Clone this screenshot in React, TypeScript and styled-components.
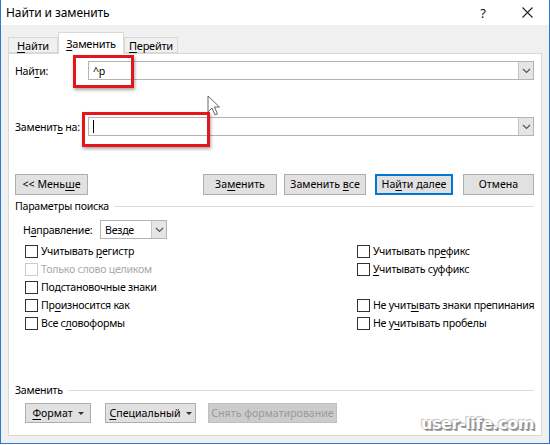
import React from "react";
import styled, { createGlobalStyle } from "styled-components";

const GlobalStyle = createGlobalStyle`
  html, body {
    margin: 0;
    padding: 0;
    background: #ffffff;
  }
  body {
    font-family: "Noto Sans", "Liberation Sans", sans-serif;
    font-size: 10.6px;
    letter-spacing: -0.25px;
    color: #000;
  }
  * {
    box-sizing: border-box;
  }
`;

const Window = styled.div`
  position: relative;
  width: 550px;
  height: 444px;
  display: flex;
  flex-direction: column;
  background: #f0f0f0;
  border: 1px solid #2b78d4;
  border-top: none;
  overflow: hidden;
  white-space: nowrap;
`;

const TitleBar = styled.div`
  height: 25px;
  background: #ffffff;
  display: flex;
  align-items: center;
  padding-left: 5px;
`;

const Title = styled.div`
  flex: 1;
  font-size: 12px;
  letter-spacing: -0.1px;
  line-height: 16px;
`;

const Caption = styled.div`
  width: 44px;
  height: 25px;
  display: flex;
  align-items: center;
  justify-content: center;
  font-size: 13px;
  color: #111;
`;

const Body = styled.div`
  flex: 1;
  display: flex;
  flex-direction: column;
  padding: 7px;
`;

const TabStrip = styled.div`
  display: flex;
  align-items: flex-end;
  height: 21px;
  position: relative;
  z-index: 1;
`;

const Tab = styled.div<{ $active?: boolean; $w: number }>`
  width: ${(p) => p.$w}px;
  height: ${(p) => (p.$active ? "22px" : "16px")};
  margin-bottom: ${(p) => (p.$active ? "-1px" : "0")};
  padding-top: ${(p) => (p.$active ? "3px" : "0")};
  text-align: center;
  font-size: 11px;
  background: ${(p) => (p.$active ? "#ffffff" : "#f0f0f0")};
  border: 1px solid #d9d9d9;
  border-bottom: ${(p) => (p.$active ? "none" : "1px solid #d9d9d9")};
  line-height: 15px;
`;

const Panel = styled.div`
  flex: 1;
  display: flex;
  flex-direction: column;
  background: #ffffff;
  border: 1px solid #d9d9d9;
  padding: 7px 7px 12px 6px;
`;

const FieldRow = styled.div<{ $gap?: number }>`
  display: flex;
  align-items: center;
  height: 19px;
  margin-top: ${(p) => p.$gap ?? 0}px;
`;

const FieldLabel = styled.div`
  width: 73px;
  line-height: 16px;
`;

const Combo = styled.div<{ $w?: number }>`
  display: flex;
  align-items: center;
  height: 19px;
  ${(p) => (p.$w ? `width: ${p.$w}px;` : "flex: 1;")}
  border: 1px solid #b4b4b4;
  background: #ffffff;
  padding-left: 4px;
`;

const ComboText = styled.div`
  flex: 1;
  line-height: 16px;
  display: flex;
  align-items: center;
`;

const Caret = styled.span`
  display: inline-block;
  width: 1px;
  height: 13px;
  background: #000;
`;

const ComboButton = styled.div`
  width: 15px;
  height: 17px;
  display: flex;
  align-items: center;
  justify-content: center;
  background: #e5e5e5;
  border-left: 1px solid #c4c4c4;
`;

const ButtonRow = styled.div`
  display: flex;
  align-items: center;
  margin-top: 38px;
`;

const Button = styled.button<{ $w: number; $default?: boolean; $h?: number; $ml?: number }>`
  width: ${(p) => p.$w}px;
  height: ${(p) => p.$h ?? 21}px;
  margin-left: ${(p) => p.$ml ?? 0}px;
  padding: 0;
  font: inherit;
  line-height: 15px;
  color: #000;
  background: #e1e1e1;
  border: 1px solid ${(p) => (p.$default ? "#0078d7" : "#adadad")};
  box-shadow: ${(p) => (p.$default ? "inset 0 0 0 1px #0078d7" : "none")};
  display: flex;
  align-items: center;
  justify-content: center;
  white-space: nowrap;

  &:disabled {
    background: #cccccc;
    border-color: #bfbfbf;
    color: #9a9a9a;
  }
`;

const Spacer = styled.div`
  flex: 1;
`;

const SectionHeader = styled.div<{ $gap?: number; $auto?: boolean }>`
  display: flex;
  align-items: center;
  line-height: 16px;
  margin-top: ${(p) => (p.$auto ? "auto" : `${p.$gap ?? 0}px`)};

  &::after {
    content: "";
    flex: 1;
    height: 1px;
    background: #dcdcdc;
    margin-left: 5px;
  }
`;

const DirectionRow = styled.div`
  display: flex;
  align-items: center;
  margin: 6px 0 0 8px;
`;

const DirectionLabel = styled.div`
  width: 77px;
  line-height: 16px;
`;

const OptionGrid = styled.div`
  display: grid;
  grid-template-columns: 332px 1fr;
  grid-auto-rows: 18px;
  margin: 3px 0 0 10px;
`;

const Option = styled.label<{ $disabled?: boolean }>`
  display: flex;
  align-items: center;
  line-height: 16px;
  color: ${(p) => (p.$disabled ? "#a8a8a8" : "#000")};
`;

const Box = styled.span<{ $disabled?: boolean }>`
  width: 13px;
  height: 13px;
  border: 1px solid ${(p) => (p.$disabled ? "#cccccc" : "#333333")};
  background: #ffffff;
  margin-right: 3px;
  flex: none;
`;

const BottomRow = styled.div`
  display: flex;
  align-items: center;
  margin: 5px 0 0 10px;
`;

const Triangle = styled.span`
  width: 0;
  height: 0;
  margin-left: 5px;
  border-left: 3px solid transparent;
  border-right: 3px solid transparent;
  border-top: 3px solid #333;
`;

const U = styled.span`
  text-decoration: underline;
  text-underline-offset: 2px;
`;

const Highlight = styled.div<{ $x: number; $y: number; $w: number; $h: number }>`
  position: absolute;
  left: ${(p) => p.$x}px;
  top: ${(p) => p.$y}px;
  width: ${(p) => p.$w}px;
  height: ${(p) => p.$h}px;
  border: 3px solid #e2161b;
  box-shadow: 1px 2px 3px rgba(0, 0, 0, 0.35);
  pointer-events: none;
`;

const Cursor = styled.svg`
  position: absolute;
  left: 206px;
  top: 95px;
  opacity: 0.75;
`;

const Watermark = styled.div`
  position: absolute;
  right: 15px;
  bottom: 10px;
  font-family: "DejaVu Sans", sans-serif;
  font-weight: bold;
  font-size: 16px;
  line-height: 18px;
  letter-spacing: -0.4px;
  color: #ffffff;
  text-shadow: 1px 1px 0 #8d8d8d, 2px 2px 0 #9d9d9d, -1px -1px 0 #c8c8c8,
    0 0 2px #999;
`;

const Chevron = () => (
  <svg width="9" height="6" viewBox="0 0 9 6">
    <polyline points="1,1 4.5,4.5 8,1" fill="none" stroke="#555" strokeWidth="1.2" />
  </svg>
);

type OptionItem = { text: React.ReactNode; disabled?: boolean } | null;

const options: OptionItem[] = [
  { text: <>Учитывать <U>р</U>егистр</> },
  { text: <>Учитывать пр<U>е</U>фикс</> },
  { text: "Только слово целиком", disabled: true },
  { text: <><U>У</U>читывать суффикс</> },
  { text: "Подстановочные знаки" },
  null,
  { text: <>Пр<U>о</U>износится как</> },
  { text: <>Не учит<U>ы</U>вать знаки препинания</> },
  { text: <>Все с<U>л</U>овоформы</> },
  { text: <>Не у<U>ч</U>итывать пробелы</> },
];

export default function App() {
  return (
    <>
      <GlobalStyle />
      <Window>
        <TitleBar>
          <Title>Найти и заменить</Title>
          <Caption>?</Caption>
          <Caption>
            <svg width="11" height="11" viewBox="0 0 11 11">
              <path d="M0.5 0.5 L10.5 10.5 M10.5 0.5 L0.5 10.5" stroke="#222" strokeWidth="1.1" />
            </svg>
          </Caption>
        </TitleBar>
        <Body>
          <TabStrip>
            <Tab $w={50}><U>Н</U>айти</Tab>
            <Tab $w={66} $active><U>З</U>аменить</Tab>
            <Tab $w={54}><U>П</U>ерейти</Tab>
          </TabStrip>
          <Panel>
            <FieldRow>
              <FieldLabel>Най<U>т</U>и:</FieldLabel>
              <Combo>
                <ComboText>^p</ComboText>
                <ComboButton><Chevron /></ComboButton>
              </Combo>
            </FieldRow>
            <FieldRow $gap={37}>
              <FieldLabel>Заменит<U>ь</U> на:</FieldLabel>
              <Combo>
                <ComboText><Caret /></ComboText>
                <ComboButton><Chevron /></ComboButton>
              </Combo>
            </FieldRow>
            <ButtonRow>
              <Button $w={73}><span>&lt;&lt; Мень<U>ш</U>е</span></Button>
              <Spacer />
              <Button $w={74}><span>За<U>м</U>енить</span></Button>
              <Button $w={82} $ml={7}><span>Заменить <U>в</U>се</span></Button>
              <Button $w={78} $ml={9} $default><span>На<U>й</U>ти далее</span></Button>
              <Button $w={71} $ml={10}><span>Отмена</span></Button>
            </ButtonRow>
            <SectionHeader $gap={3}>Параметры поиска</SectionHeader>
            <DirectionRow>
              <DirectionLabel>Н<U>а</U>правление:</DirectionLabel>
              <Combo $w={67}>
                <ComboText>Везде</ComboText>
                <ComboButton><Chevron /></ComboButton>
              </Combo>
            </DirectionRow>
            <OptionGrid>
              {options.map((o, i) =>
                o ? (
                  <Option key={i} $disabled={o.disabled}>
                    <Box $disabled={o.disabled} />
                    <span>{o.text}</span>
                  </Option>
                ) : (
                  <div key={i} />
                )
              )}
            </OptionGrid>
            <SectionHeader $auto>Заменить</SectionHeader>
            <BottomRow>
              <Button $w={66} $h={20}><span><U>Ф</U>ормат</span><Triangle /></Button>
              <Button $w={91} $h={20} $ml={14}><span><U>С</U>пециальный</span><Triangle /></Button>
              <Button $w={129} $h={20} $ml={12} disabled><span>Снять форматирование</span></Button>
            </BottomRow>
          </Panel>
        </Body>
        <Highlight $x={72} $y={55} $w={61} $h={33} />
        <Highlight $x={81} $y={112} $w={128} $h={35} />
        <Cursor width="14" height="22" viewBox="0 0 14 22">
          <path d="M1 1 L1 17 L5 13 L8 20 L10.5 19 L7.5 12 L12.5 12 Z" fill="#fff" stroke="#333" strokeWidth="1" />
        </Cursor>
        <Watermark>user-life.com</Watermark>
      </Window>
    </>
  );
}
